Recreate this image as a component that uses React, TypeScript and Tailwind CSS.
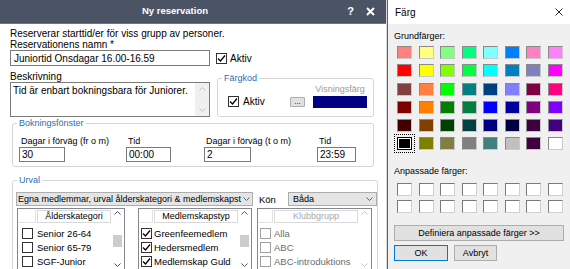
import React from 'react';

const basicColors = [
  ['#ff8080', '#ffff80', '#80ff80', '#00ff80', '#80ffff', '#0080ff', '#ff80c0', '#ff80ff'],
  ['#ff0000', '#ffff00', '#80ff00', '#00ff40', '#00ffff', '#0080c0', '#8080c0', '#ff00ff'],
  ['#804040', '#ff8040', '#00ff00', '#008080', '#004080', '#8080ff', '#800040', '#ff0080'],
  ['#800000', '#ff8000', '#008000', '#008040', '#0000ff', '#0000a0', '#800080', '#8000ff'],
  ['#400000', '#804000', '#004000', '#004040', '#000080', '#000040', '#400040', '#400080'],
  ['#000000', '#808000', '#808040', '#808080', '#408080', '#c0c0c0', '#400040', '#ffffff'],
];

function Check({ checked, gray }: { checked?: boolean; gray?: boolean }) {
  return (
    <span
      className={`flex h-[11px] w-[11px] shrink-0 items-center justify-center border bg-white ${
        gray ? 'border-[#a0a0a0]' : 'border-[#333333]'
      }`}
    >
      {checked && (
        <svg width="9" height="9" viewBox="0 0 9 9">
          <path d="M1 4.5 L3.5 7 L8 1.5" fill="none" stroke="#000" strokeWidth="1.3" />
        </svg>
      )}
    </span>
  );
}

function Chevron({ up, color = '#606060' }: { up?: boolean; color?: string }) {
  return (
    <svg width="7" height="4" viewBox="0 0 7 4" className="shrink-0">
      <path
        d={up ? 'M0.5 3.5 L3.5 0.5 L6.5 3.5' : 'M0.5 0.5 L3.5 3.5 L6.5 0.5'}
        fill="none"
        stroke={color}
        strokeWidth="1"
      />
    </svg>
  );
}

function Group({ title, className, children }: { title: string; className: string; children: React.ReactNode }) {
  return (
    <fieldset className={`shrink-0 rounded-[3px] border border-[#d5d5d5] ${className}`}>
      <legend className="ml-[4px] px-[2px] text-[9px] leading-[11px] text-[#2f6db5]">{title}</legend>
      {children}
    </fieldset>
  );
}

function Field({ label, value, col, input }: { label: string; value: string; col: string; input: string }) {
  return (
    <div className={`flex flex-col ${col}`}>
      <span className="pl-[2px] text-[9px] leading-[10px]">{label}</span>
      <div className={`mt-[1px] flex h-[15px] items-center border border-[#7a7a7a] px-[2px] ${input}`}>{value}</div>
    </div>
  );
}

type ListProps = {
  title: string;
  items: string[];
  className: string;
  checked?: boolean;
  disabled?: boolean;
  check: string;
};

function List({ title, items, className, checked, disabled, check }: ListProps) {
  return (
    <div className={`flex h-[64px] shrink-0 border border-[#828790] bg-white ${className}`}>
      <div className="flex min-w-0 flex-1 flex-col pt-[1px]">
        <div className="flex h-[13px] shrink-0">
          <div className={`border-r border-b border-[#e3e3e3] ${check}`} />
          <div
            className={`ml-[1px] flex flex-1 items-center justify-center border border-[#d9d9d9] text-[9px] ${
              disabled ? 'text-[#a8a8a8]' : 'text-black'
            }`}
          >
            {title}
          </div>
        </div>
        <div className="mt-[3px] flex flex-col">
          {items.map((item) => (
            <div key={item} className="flex h-[14px] items-center">
              <div className={`flex justify-center ${check}`}>
                <Check checked={checked} gray={disabled} />
              </div>
              <span
                className={`ml-[1px] whitespace-nowrap text-[9.5px] ${disabled ? 'text-[#6d6d6d]' : 'text-black'}`}
              >
                {item}
              </span>
            </div>
          ))}
        </div>
      </div>
      <div className="flex w-[13px] shrink-0 flex-col items-center pt-[2px]">
        <Chevron up color={disabled ? '#c4c4c4' : '#505050'} />
        {disabled ? (
          <div className="h-[32px]" />
        ) : (
          <div className="mt-[20px] h-[12px] w-[9px] bg-[#cdcdcd]" />
        )}
        <div className="mt-[16px]">
          <Chevron color={disabled ? '#c4c4c4' : '#505050'} />
        </div>
      </div>
    </div>
  );
}

function Select({ className, children }: { className: string; children: React.ReactNode }) {
  return (
    <div
      className={`flex h-[14px] shrink-0 items-center border border-[#adadad] bg-[#e5e5e5] pl-[1px] pr-[3px] text-[9px] ${className}`}
    >
      <span className="flex-1 whitespace-nowrap">{children}</span>
      <span className="ml-[2px]">
        <Chevron color="#606060" />
      </span>
    </div>
  );
}

function Swatch({ color, selected }: { color: string; selected?: boolean }) {
  if (selected) {
    return (
      <div className="h-[13px] w-[15px] outline-1 outline-offset-[2px] outline-dotted outline-black">
        <div className="h-full w-full border border-black bg-white p-[1px]">
          <div className="h-full w-full" style={{ backgroundColor: color }} />
        </div>
      </div>
    );
  }
  return (
    <div
      className="h-[13px] w-[15px] border border-t-[#8a8a8a] border-l-[#8a8a8a] border-b-[#c8c8c8] border-r-[#c8c8c8]"
      style={{ backgroundColor: color }}
    />
  );
}

export default function App() {
  return (
    <div className="flex h-[269px] w-[570px] overflow-hidden bg-white font-['Liberation_Sans',Arial,sans-serif] text-black">
      {/* Ny reservation */}
      <div className="flex w-[386px] shrink-0 flex-col overflow-hidden">
        <div className="flex h-[24px] shrink-0 items-center border-b border-[#6b7584] bg-[#4a5465] pl-[142px] pr-[11px] text-white">
          <span className="text-[9.5px] font-bold">Ny reservation</span>
          <span className="ml-auto text-[11px] font-bold">?</span>
          <svg className="ml-[12px]" width="9" height="9" viewBox="0 0 9 9">
            <path d="M1 1 L8 8 M8 1 L1 8" stroke="#fff" strokeWidth="2" />
          </svg>
        </div>

        <div className="flex flex-col pl-[10px] pt-[4px] text-[10px] leading-[11px]">
          <p>Reserverar starttid/er för viss grupp av personer.</p>
          <p>Reservationens namn *</p>
          <div className="flex items-center">
            <div className="flex h-[16px] w-[200px] items-center border border-[#7a7a7a] px-[3px]">
              Juniortid Onsdagar 16.00-16.59
            </div>
            <span className="ml-[6px]">
              <Check checked />
            </span>
            <span className="ml-[3px]">Aktiv</span>
          </div>

          <div className="mt-[5px] flex items-start">
            <div className="w-[200px]">
              <p>Beskrivning</p>
              <div className="flex h-[35px] border border-[#7a7a7a]">
                <div className="flex-1 px-[2px] pt-[2px] whitespace-nowrap">Tid är enbart bokningsbara för Juniorer.</div>
                <div className="flex w-[14px] flex-col items-center justify-between bg-[#f0f0f0] py-[4px]">
                  <Chevron up color="#c0c0c0" />
                  <Chevron color="#c0c0c0" />
                </div>
              </div>
            </div>

            <Group title="Färgkod" className="ml-[7px] mt-[2px] h-[44px] w-[157px]">
              <div className="flex items-end pl-[10px] pr-[6px]">
                <div className="mb-[1px] flex items-center">
                  <Check checked />
                  <span className="ml-[4px]">Aktiv</span>
                </div>
                <div className="mb-[1px] ml-auto flex h-[10px] w-[15px] items-end justify-center rounded-[1px] border border-[#adadad] bg-[#e1e1e1] text-[8px] leading-[8px]">
                  ...
                </div>
                <div className="ml-[8px] flex flex-col items-center">
                  <span className="text-[9px] leading-[10px] text-[#9a9a9a]">Visningsfärg</span>
                  <div className="mt-[2px] h-[12px] w-[54px] bg-[#000080]" />
                </div>
              </div>
            </Group>
          </div>

          <Group title="Bokningsfönster" className="ml-[2px] mt-[1px] h-[49px] w-[362px]">
            <div className="mt-[7px] flex pl-[6px]">
              <Field label="Dagar i förväg (fr o m)" value="30" col="w-[107px]" input="w-[46px]" />
              <Field label="Tid" value="00:00" col="w-[78px]" input="w-[45px]" />
              <Field label="Dagar i förväg (t o m)" value="2" col="w-[113px]" input="w-[47px]" />
              <Field label="Tid" value="23:59" col="w-[40px]" input="w-[39px]" />
            </div>
          </Group>

          <Group title="Urval" className="ml-[2px] mt-[8px] h-[120px] w-[361px]">
            <div className="mt-[6px] flex items-center pl-[3px]">
              <Select className="w-[237px]">Egna medlemmar, urval ålderskategori &amp; medlemskapst</Select>
              <span className="ml-[6px] text-[9.5px]">Kön</span>
              <Select className="ml-[12px] w-[89px]">
                <span className="pl-[3px]">Båda</span>
              </Select>
            </div>
            <div className="mt-[2px] flex pl-[4px]">
              <List
                title="Ålderskategori"
                items={['Senior 26-64', 'Senior 65-79', 'SGF-Junior']}
                className="w-[108px]"
                check="w-[18px]"
              />
              <List
                title="Medlemskapstyp"
                items={['Greenfeemedlem', 'Hedersmedlem', 'Medlemskap Guld']}
                className="ml-[13px] w-[114px]"
                check="w-[14px]"
                checked
              />
              <List
                title="Klubbgrupp"
                items={['Alla', 'ABC', 'ABC-introduktions']}
                className="ml-[5px] w-[115px]"
                check="w-[15px]"
                disabled
              />
            </div>
          </Group>
        </div>
      </div>

      {/* Färg */}
      <div className="w-[1px] shrink-0 bg-[#dcdcdc]" />
      <div className="flex w-[183px] shrink-0 flex-col border-l border-[#5e5e5e]">
        <div className="flex h-[24px] shrink-0 items-center bg-white pl-[7px] pr-[7px]">
          <span className="text-[10px]">Färg</span>
          <svg className="ml-auto" width="8" height="8" viewBox="0 0 8 8">
            <path d="M0.5 0.5 L7.5 7.5 M7.5 0.5 L0.5 7.5" stroke="#222" strokeWidth="1" />
          </svg>
        </div>
        <div className="flex flex-1 flex-col bg-[#f0f0f0] pl-[6px] pt-[7px] text-[9px] leading-[10px]">
          <p>Grundfärger:</p>
          <div className="ml-[3px] mt-[5px] grid w-max grid-cols-[repeat(8,15px)] gap-x-[6.5px] gap-y-[5.3px]">
            {basicColors.flatMap((row, r) =>
              row.map((c, i) => <Swatch key={`${r}-${i}`} color={c} selected={r === 5 && i === 0} />)
            )}
          </div>
          <p className="mt-[16px]">Anpassade färger:</p>
          <div className="ml-[3px] mt-[7px] grid w-max grid-cols-[repeat(8,15px)] gap-x-[6.5px] gap-y-[4px]">
            {Array.from({ length: 16 }).map((_, i) => (
              <div
                key={i}
                className="h-[13px] w-[15px] border border-t-[#7a7a7a] border-l-[#7a7a7a] border-b-[#d0d0d0] border-r-[#d0d0d0] bg-white"
              />
            ))}
          </div>
          <div className="mt-[12px] flex h-[16px] w-[170px] items-center justify-center border border-[#adadad] bg-[#e1e1e1]">
            Definiera anpassade färger &gt;&gt;
          </div>
          <div className="mt-[4px] flex">
            <div className="flex h-[16px] w-[54px] items-center justify-center border border-[#0078d7] bg-[#e1e1e1]">
              OK
            </div>
            <div className="ml-[6px] flex h-[16px] w-[43px] items-center justify-center border border-[#adadad] bg-[#e1e1e1]">
              Avbryt
            </div>
          </div>
        </div>
      </div>
    </div>
  );
}
